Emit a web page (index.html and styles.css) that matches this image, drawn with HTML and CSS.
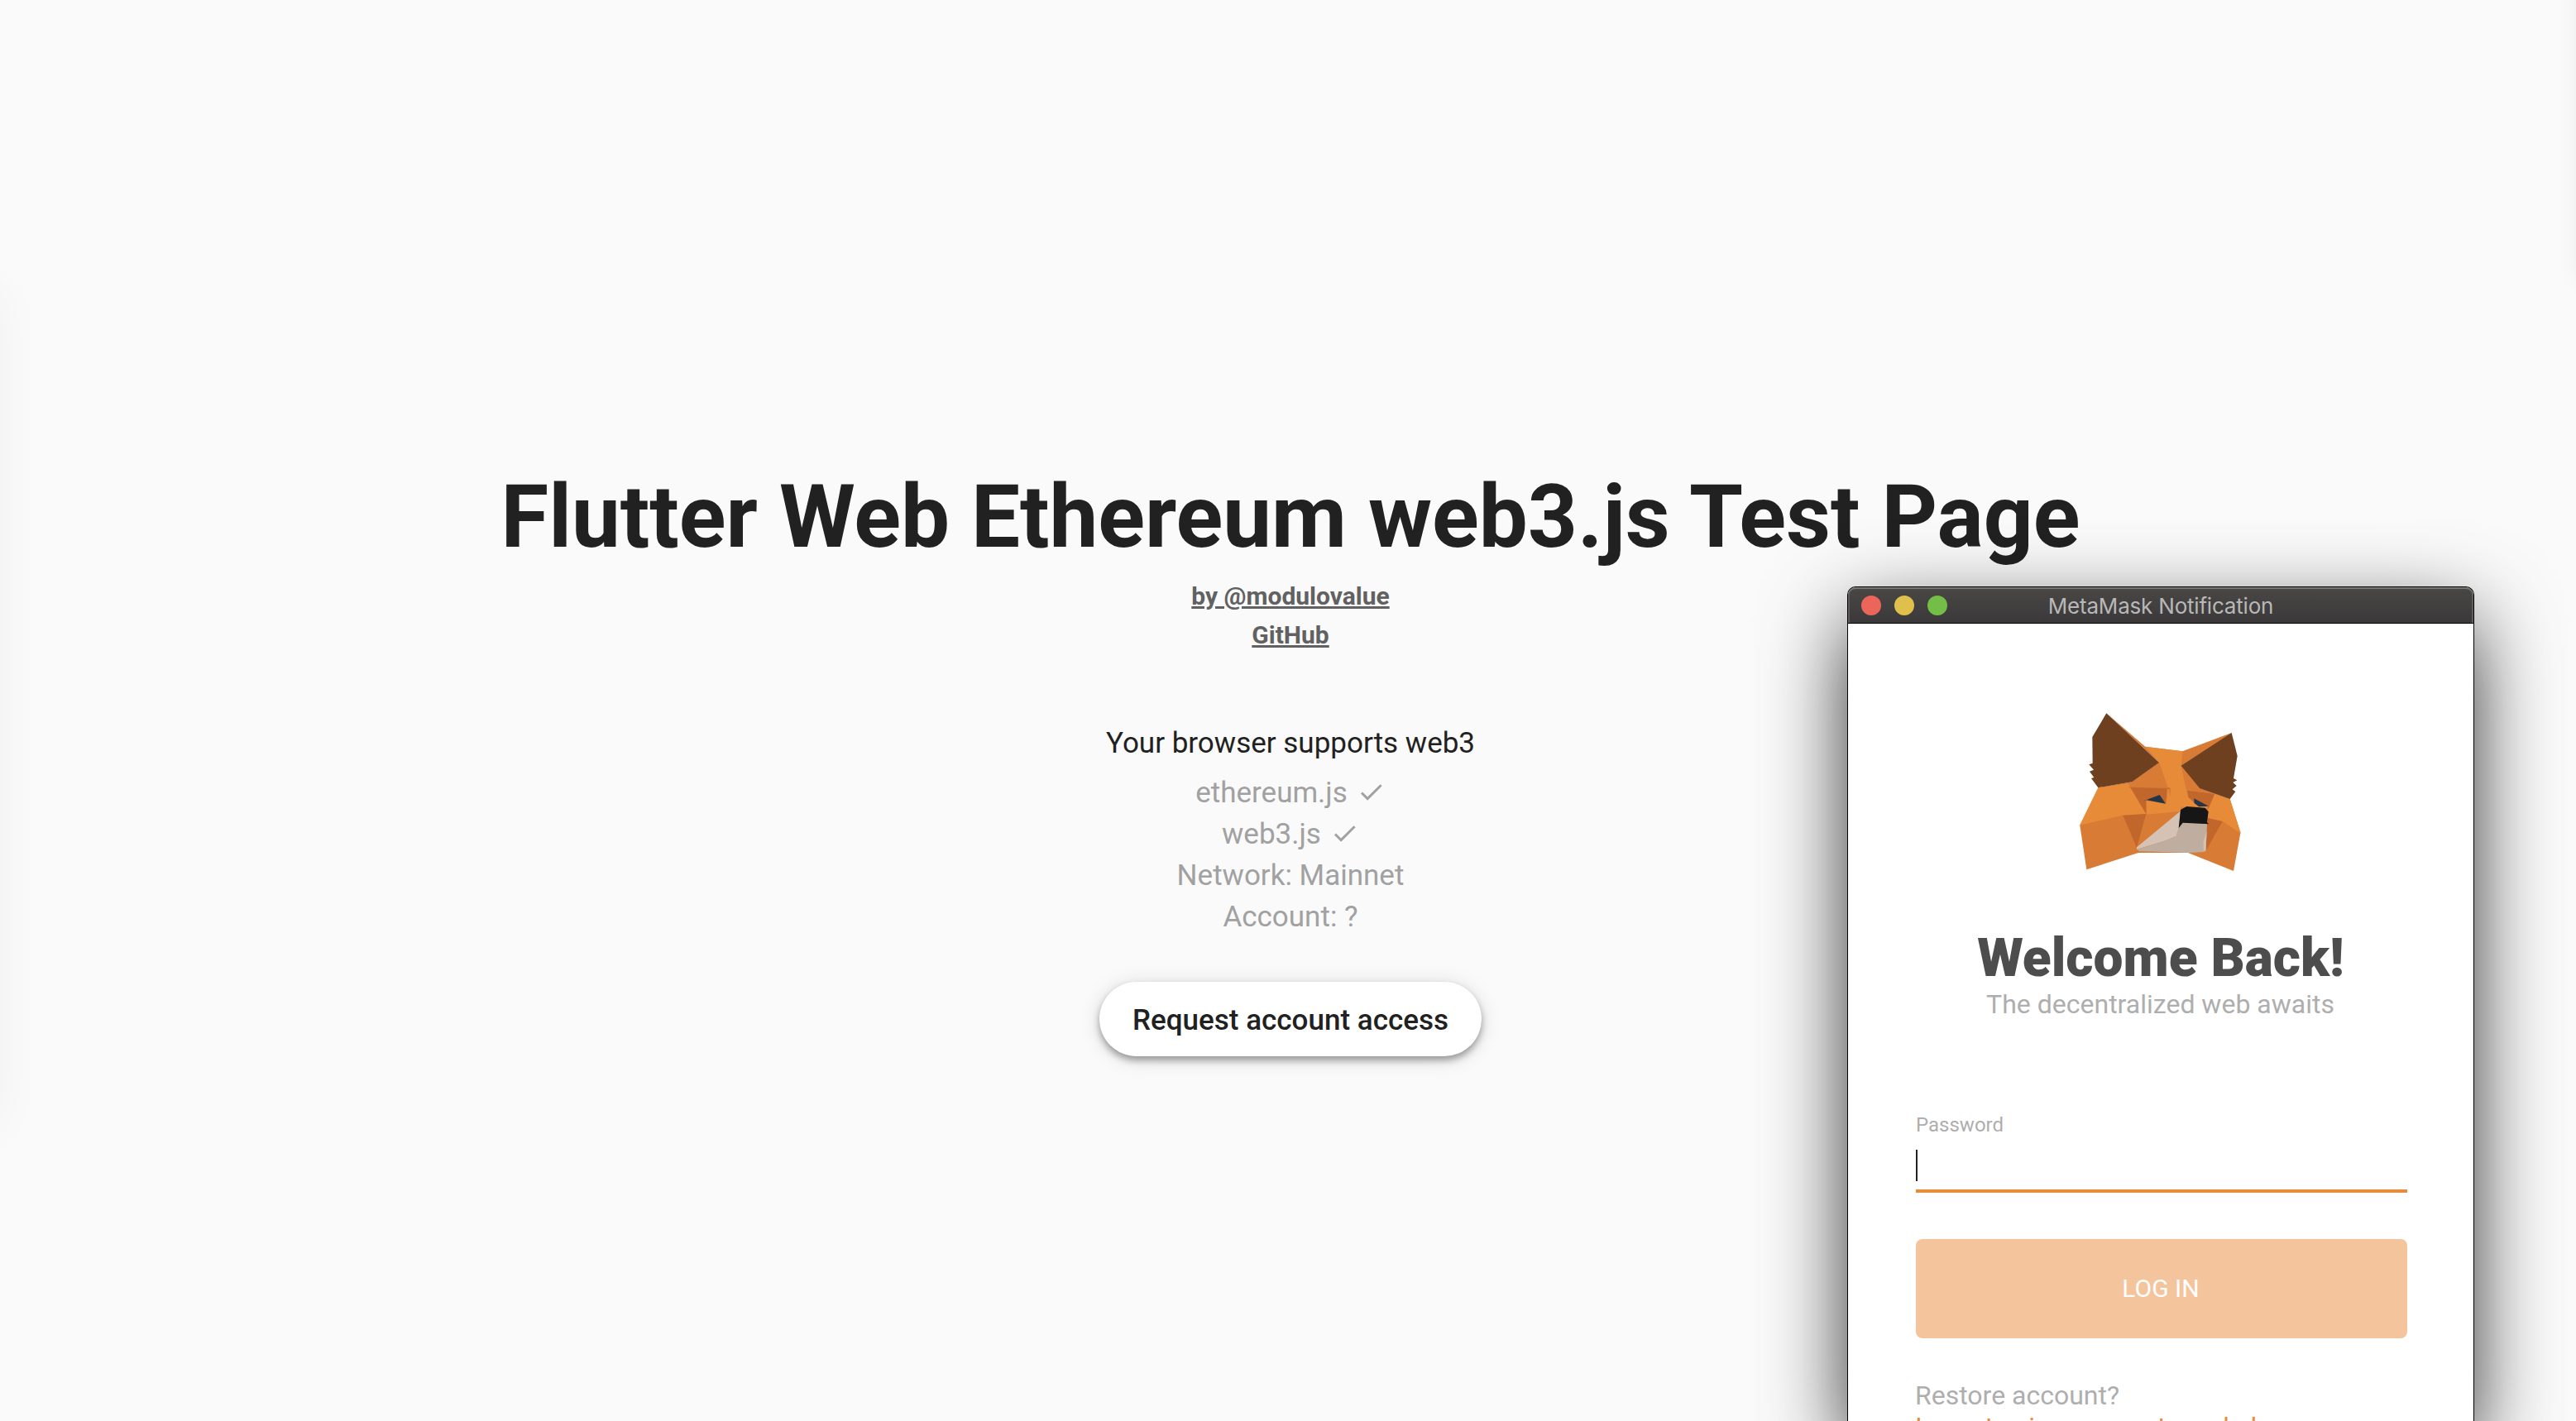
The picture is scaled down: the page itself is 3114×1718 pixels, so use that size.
FILE: index.html
```html
<!DOCTYPE html>
<html lang="en">
<head>
<meta charset="utf-8">
<title>Flutter Web Ethereum web3.js Test Page</title>
<link rel="stylesheet" href="styles.css">
</head>
<body>
<main class="page">
  <h1 class="title">Flutter Web Ethereum web3.js Test Page</h1>
  <a class="link">by @modulovalue</a>
  <a class="link">GitHub</a>
  <p class="support">Your browser supports web3</p>
  <ul class="status">
    <li class="status-row">ethereum.js <svg class="check" viewBox="0 0 24 24"><path d="M9 16.17L4.83 12l-1.42 1.41L9 19 21 7l-1.41-1.41z"/></svg></li>
    <li class="status-row">web3.js <svg class="check" viewBox="0 0 24 24"><path d="M9 16.17L4.83 12l-1.42 1.41L9 19 21 7l-1.41-1.41z"/></svg></li>
    <li class="status-row">Network: Mainnet</li>
    <li class="status-row">Account: ?</li>
  </ul>
  <button class="request">Request account access</button>
</main>

<div class="edge edge-left"></div>
<div class="edge edge-right"></div>

<section class="window">
  <header class="titlebar">
    <div class="lights">
      <span class="light light-close"></span>
      <span class="light light-min"></span>
      <span class="light light-max"></span>
    </div>
    <span class="titlebar-text">MetaMask Notification</span>
  </header>
  <div class="content">
    <svg class="fox" viewBox="0 0 720 690">
      <path fill="#d77b35" d="M169 67L310 188L445 205L623 138L508 340L617 378L655 502L630 639L465 573H285L97 634L73 474L140 337L262 316L360 246Z"/>
      <path fill="#e88b39" d="M310 188L445 205L440 257L465 372L488 392L540 404L530 412L438 406L402 372V340H393L360 246Z"/>
      <path fill="#e88b39" d="M139 337L248 321L313 432L229 437L66 475L73 472Z"/>
      <path fill="#e88b39" d="M562 359L617 378L657 503L590 459L536 447V419Z"/>
      <path fill="#d77b35" d="M360 246L391 338L250 335L262 316Z"/>
      <path fill="#c1672c" d="M391 335L403 340L391 342Z"/>
      <path fill="#e88b39" d="M313 384L386 395L393 338L403 372L440 406L437 423L315 434Z"/>
      <path fill="#c1672c" d="M246 335L389 339L384 395L362 363L313 382V432L256 337Z"/>
      <path fill="#c1672c" d="M462 347L561 359L536 419L538 404L487 376V392L467 372Z"/>
      <path fill="#d77b35" d="M441 257L508 340L562 359L462 347Z"/>
      <path fill="#c1672c" d="M229 437L313 432L279 554Z"/>
      <path fill="#c1672c" d="M536 447L590 459L529 567Z"/>
      <path fill="#e88b39" d="M467 372L488 392L540 404L528 412L460 406L438 406Z"/>
      <path fill="#6e401f" d="M169 67L360 246L262 316L139 337L114 303L124 300L108 278L123 272L106 253L119 248L118 153Z"/>
      <path fill="#6e401f" d="M623 138L644 222L630 303L643 310L628 318L641 330L626 343L637 351L617 378L508 340L440 257Z"/>
      <path fill="#263447" d="M300 386L362 363L384 395L315 382Z"/>
      <path fill="#263447" d="M487 376L540 404L504 406L487 392Z"/>
      <path fill="#d5c2b4" d="M279 553L437 422L432 484L422 513L380 530L279 561Z"/>
      <path fill="#bfaea0" d="M281 561L380 530L422 513L432 478L446 463L534 468L529 567L522 570L466 573L288 567Z"/>
      <path fill="#d5c2b4" d="M533 495L529 567L521 563V532Z"/>
      <path fill="#161616" d="M438 417L460 405L527 410L539 424L534 462L540 469L446 464L431 484Z"/>
    </svg>
    <h2 class="welcome">Welcome Back!</h2>
    <p class="tagline">The decentralized web awaits</p>
    <form class="form">
      <label class="label">Password</label>
      <div class="field"><span class="caret"></span></div>
      <button class="login" type="button">LOG IN</button>
      <p class="restore">Restore account?</p>
      <a class="restore import">Import using account seed phrase</a>
    </form>
  </div>
</section>
</body>
</html>
```
FILE: styles.css
```css
* { box-sizing: border-box; }

html { overflow: hidden; }

body {
  margin: 0;
  width: 3114px;
  height: 1718px;
  overflow: hidden;
  position: relative;
  background: #fafafa;
  color: #212121;
  font-family: Roboto, sans-serif;
}

h1, h2, p, ul { margin: 0; padding: 0; }

button { border: 0; font-family: inherit; }

.page {
  display: flex;
  flex-direction: column;
  align-items: center;
  padding: 564px 0 0 6px;
}

.title {
  font-size: 105px;
  line-height: 124px;
  font-weight: 700;
  letter-spacing: -0.02px;
  white-space: nowrap;
  margin-bottom: 9px;
}

.link {
  font-size: 30px;
  line-height: 47px;
  font-weight: 700;
  color: #616161;
  text-decoration: underline;
}

.support {
  margin-top: 83px;
  font-size: 35px;
  line-height: 50px;
}

.status {
  list-style: none;
  margin-top: 10px;
  display: flex;
  flex-direction: column;
  align-items: center;
  font-size: 35px;
  line-height: 50px;
  color: #a1a1a1;
}

.status-row {
  height: 50px;
  display: flex;
  align-items: center;
  gap: 11px;
}

.check {
  width: 35px;
  height: 35px;
  margin-bottom: 4px;
  fill: currentColor;
}

.request {
  margin-top: 53px;
  width: 462px;
  height: 90px;
  padding: 2px 0 0;
  border-radius: 45px;
  background: #fff;
  color: #212121;
  font-size: 35px;
  font-weight: 500;
  box-shadow: 0 5px 8px rgba(0, 0, 0, 0.34), 0 3px 26px rgba(0, 0, 0, 0.13);
}

/* Soft shadows cast by neighbouring windows outside the page */
.edge { position: absolute; }

.edge-left {
  left: -40px;
  top: 350px;
  width: 20px;
  height: 1010px;
  box-shadow: 0 0 64px rgba(0, 0, 0, 0.13);
}

.edge-right {
  left: 3124px;
  top: -40px;
  width: 40px;
  height: 375px;
  box-shadow: 0 0 32px rgba(0, 0, 0, 0.12);
}

.window {
  position: absolute;
  left: 2233px;
  top: 709px;
  width: 758px;
  height: 1009px;
  overflow: hidden;
  border: 1px solid #000;
  border-bottom: 0;
  border-radius: 10px 10px 0 0;
  background: #fff;
  box-shadow: 0 36px 100px rgba(0, 0, 0, 0.74), 0 100px 60px rgba(0, 0, 0, 0.1);
}

.titlebar {
  height: 44px;
  display: grid;
  grid-template-columns: 1fr auto 1fr;
  align-items: center;
  padding: 0 16px;
  border-bottom: 1px solid #000;
  border-radius: 9px 9px 0 0;
  background: linear-gradient(#4a4846, #3a3839);
  box-shadow: inset 0 2px 0 #777874, inset 2px 0 0 #5e5d5c, inset -2px 0 0 #5e5d5c;
}

.lights {
  display: flex;
  gap: 16px;
}

.light {
  width: 24px;
  height: 24px;
  border-radius: 50%;
}

.light-close { background: #ec655a; }
.light-min { background: #e0c04c; }
.light-max { background: #72be47; }

.titlebar-text {
  padding-top: 2px;
  font-family: Inter, sans-serif;
  font-size: 26px;
  letter-spacing: -0.2px;
  color: #b9b8b8;
}

.content {
  display: flex;
  flex-direction: column;
  align-items: center;
  padding: 86px 80px 0 82px;
}

.fox {
  width: 240px;
  height: 230px;
  margin-right: 6px;
}

.welcome {
  margin: 52px 2px 0 0;
  font-size: 64px;
  line-height: 74px;
  font-weight: 900;
  color: #4d4d4d;
}

.tagline {
  margin: -2px 3px 0 0;
  font-size: 32px;
  line-height: 40px;
  color: #aeaeae;
}

.form {
  width: 100%;
  margin-top: 112px;
  display: flex;
  flex-direction: column;
}

.label {
  font-size: 24px;
  line-height: 28px;
  color: #aeaeae;
}

.field {
  height: 68px;
  padding-top: 16px;
  border-bottom: 4px solid #e88b3a;
}

.caret {
  display: block;
  width: 2px;
  height: 38px;
  background: #222;
}

.login {
  margin: 56px 0 50px;
  height: 120px;
  padding: 0 2px 2px 0;
  border-radius: 8px;
  background: #f4c49c;
  color: #fff;
  font-size: 30px;
}

.restore {
  margin-left: -1px;
  font-size: 32px;
  line-height: 38px;
  color: #aeaeae;
}

.import {
  color: #e88b3a;
  white-space: nowrap;
}
```
